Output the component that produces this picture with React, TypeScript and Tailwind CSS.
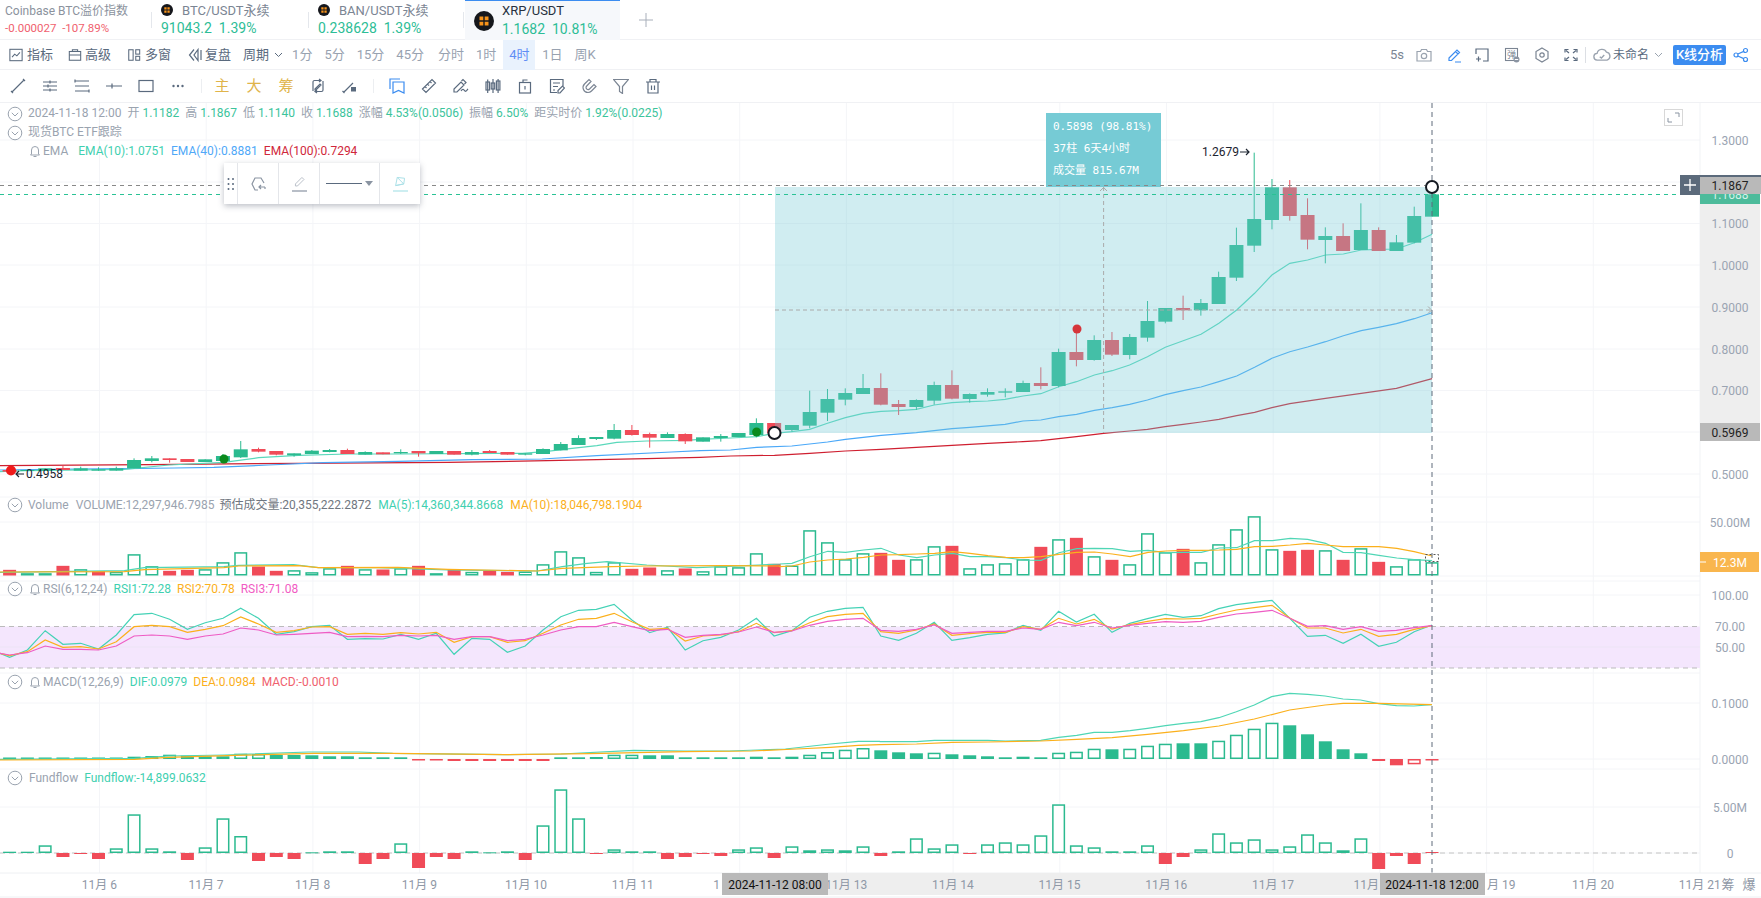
import React from "react";

const FONT = "font-['Roboto','Noto_Sans_CJK_SC',sans-serif]";
const X = (i: number) => 9.6 + 17.78 * i;
type P = [number, number];
const GREEN = "#2bba8f";
const RED = "#f04b58";

const z8 = (a: P[]): P[] => a.map(([x, y]) => [x * 0.4974, 380 + y / 3]);
const z3 = (a: P[]): P[] => a.map(([x, y]) => [700 + x * 0.5102, 100 + y / 3]);
const pts = (a: P[]) => a.map(([x, y]) => `${x.toFixed(1)},${y.toFixed(1)}`).join(" ");

const leftCandles = `r 270 270 275 275|g 270 270 273 273|g 265 265 272 272|r 257 264 270 270|g 260 265 272 272|g 262 268 272 272|g 260 265 272 272|g 235 240 265 265|g 228 235 243 247|r 235 235 240 248|r 237 237 246 246|g 238 238 246 246|g 222 228 243 250|g 183 208 232 234|r 203 207 215 217|r 213 213 224 226|g 220 220 226 230|g 210 212 222 222|g 207 210 216 217|r 206 210 222 222|g 214 216 224 224|r 217 217 223 223|g 208 216 220 222|r 213 213 220 230|g 213 213 222 222|r 213 213 224 224|g 210 216 224 226|r 210 213 219 219|r 216 216 224 224|g 220 220 224 226|g 205 207 222 222|g 186 192 211 211|g 166 174 195 195|g 171 171 177 180|g 132 150 176 178|r 135 150 165 167|r 158 162 173 203|g 157 162 174 174|r 160 162 184 192`
  .split("|").map((s) => s.split(" "));
const rightCandles = `g 1012 1012 1025 1025|g 1002 1008 1014 1025|g 999 999 1011 1011|g 955 969 1005 1012|r 969 969 1000 1000|g 975 975 990 995|g 872 936 977 985|g 867 897 938 963|g 865 879 899 916|g 822 864 882 882|r 820 864 914 916|r 900 912 921 945|g 898 900 921 930|g 845 855 902 914|r 811 855 896 898|g 880 882 897 908|g 865 876 884 890|g 865 874 878 892|g 842 849 876 876|r 802 849 858 868|g 746 756 858 862|r 680 756 780 799|g 706 720 780 782|r 696 720 764 768|g 702 711 765 778|g 603 663 713 725|g 624 624 665 670|r 587 624 631 660|g 597 609 631 647|g 515 531 612 612|g 383 435 533 543|g 158 357 437 456|g 237 262 360 388|r 240 262 348 362|r 295 345 419 448|g 382 408 420 490|r 370 408 453 453|g 310 390 450 450|r 382 390 453 453|g 405 427 453 453|g 320 348 428 430|g 260 283 350 350`
  .split("|").map((s) => s.split(" "));

const candles = [
  ...leftCandles.map((c) => ({ c: c[0], v: c.slice(1).map((n) => 380 + Number(n) / 3) })),
  ...rightCandles.map((c) => ({ c: c[0], v: c.slice(1).map((n) => 100 + Number(n) / 3) })),
];

const ema10 = [
  ...z8([[0, 275], [50, 272], [250, 268], [340, 255], [450, 247], [520, 233], [600, 226], [700, 222], [800, 222], [1000, 220], [1050, 220], [1100, 214], [1150, 205], [1200, 197], [1240, 187], [1300, 183], [1380, 181]]),
  ...z3([[0, 1018], [60, 1014], [111, 1010], [146, 1000], [180, 995], [215, 988], [250, 970], [285, 953], [320, 940], [355, 934], [390, 932], [424, 928], [459, 915], [494, 908], [529, 905], [564, 903], [598, 898], [633, 888], [668, 881], [703, 860], [738, 845], [773, 825], [808, 812], [842, 795], [877, 770], [912, 742], [947, 722], [982, 703], [1017, 670], [1052, 630], [1087, 580], [1121, 525], [1156, 490], [1191, 480], [1226, 465], [1261, 462], [1296, 450], [1330, 448], [1365, 447], [1400, 428], [1435, 403]]),
];
const ema40 = [
  ...z8([[0, 270], [100, 268], [250, 266], [350, 264], [430, 262], [540, 255], [650, 248], [800, 244], [950, 239], [1090, 237], [1200, 227], [1350, 216]]),
  ...z3([[0, 1052], [60, 1050], [111, 1042], [180, 1038], [250, 1026], [285, 1018], [355, 1006], [424, 998], [494, 986], [529, 982], [598, 973], [633, 963], [668, 960], [703, 950], [738, 943], [773, 931], [808, 923], [842, 913], [877, 900], [912, 884], [947, 872], [982, 861], [1017, 845], [1052, 828], [1087, 802], [1121, 775], [1156, 755], [1191, 741], [1226, 725], [1261, 707], [1296, 692], [1330, 682], [1365, 671], [1400, 656], [1435, 638]]),
];
const ema100 = [
  ...z8([[0, 257], [300, 254], [600, 250], [900, 247], [1100, 242], [1300, 236]]),
  ...z3([[0, 1072], [60, 1068], [146, 1066], [215, 1060], [285, 1053], [355, 1048], [424, 1042], [494, 1036], [564, 1030], [633, 1025], [668, 1022], [738, 1010], [791, 1000], [842, 993], [877, 988], [912, 980], [947, 973], [982, 966], [1017, 958], [1052, 947], [1087, 937], [1121, 923], [1156, 911], [1226, 895], [1296, 880], [1365, 865], [1435, 836]]),
];

const volTops = [
  "r510", "g520", "g520", "r498", "g508", "r514", "g516", "g463", "g499", "r513", "r510", "g508", "g487", "g457", "r500", "r513", "g511", "g517", "g505", "r498", "g508", "r509", "g505", "r498", "g520", "r510", "g516", "r513", "r516", "g515", "g493", "g454", "g472", "g516", "g487", "r507", "r503", "g511", "r506", "g514", "g499", "g502", "g460", "r492",
].map((s) => ({ c: s[0], h: (527 - Number(s.slice(1))) / 3 }));
const volTops2 = [
  "g227", "g121", "g157", "g208", "g190", "r189", "r210", "g208", "g169", "r168", "g235", "g223", "g220", "g208", "r171", "g148", "r144", "g199", "r210", "g223", "g130", "g187", "r177", "g217", "g163", "g118", "g79", "g178", "r183", "r180", "g181", "r210", "g175", "r216", "g229", "g208", "g217",
].map((s) => ({ c: s[0], h: (257 - Number(s.slice(1))) / 3 }));
const volumes = [...volTops, ...volTops2];

const parseBars = (s: string) =>
  s.split(" ").map((t) => ({ c: t[0], h: Number(t.slice(1)) }));

const macdBars = parseBars(
  "f1.5 f1.5 f1.5 f1.5 f1.5 f1.5 f1.5 h2.3 h3 h4.3 f3.3 f2.7 h2.7 h5.3 h5 f4 f4 f3.7 f2.7 f2.7 f1.7 f1.7 f1.7 r-1.5 r-1.5 r-2 r-2 r-2 r-2 r-2 r-2 f1.7 f1.7 h2 h4.3 h4.3 f3.7 f3.7 f1.7 f1.7 f1.7 f1.7 h2.3 f1.7 h2.3 h4.3 h7 h9.3 h11 f8.7 f6.7 f5.7 h6.3 f4.7 f3.7 f2.7 f1.7 h2.3 f1.7 h6.3 h7.3 h10.3 f9.7 h10.3 h13.3 h15.3 f15.7 f15.7 h18.3 h24.3 h30.3 h36.3 f33.7 f24.7 f17.7 f9.7 f5.7 r-2 r-6.3 o-5.3 r-1.5"
);
const fundBars = parseBars(
  "f1.3 f1.3 h7.7 r-4 r-1 r-6 h4.7 h38.7 h4.7 f1.7 r-7 h5.7 h34.7 h17 r-8 r-4 r-6 f0.7 f1.7 f1.7 r-11 r-6 h9.7 r-15 r-4 r-6 f1.7 f0.7 f1.7 r-7 h27.7 h63.7 h34.7 r-1 h3.7 f1.7 f1.7 r-6 r-4 r-1 r-3 h3.7 h5.7 r-5 h6.7 h2.7 h3.7 h2.7 h6.7 r-3 f1.7 h14.7 h4.7 h8.7 r-1 h8.7 h10.7 h8.7 h17.7 h48.7 h7.7 h5.7 f1.7 f1.7 h7.7 r-11 r-4 h3.7 h19.7 h10.7 h13.7 h3.7 h6.7 h18.7 h10.7 h2.7 h14.7 r-16 r-3 r-11 r1"
);

const seriesY = (left: number[], right: number[]): P[] => [
  [0, 400 + 760 / 3],
  ...left.map((y, i) => [X(i), 400 + y / 3] as P),
  ...right.map((y, i) => [X(i + 44), 490 + y / 3] as P),
];
const rsi1 = seriesY(
  [772, 750, 692, 733, 730, 747, 705, 644, 640, 658, 688, 668, 655, 625, 655, 703, 695, 680, 676, 718, 716, 717, 703, 718, 700, 763, 715, 718, 757, 738, 690, 650, 631, 628, 613, 660, 698, 682, 750, 722, 712, 690, 655, 708],
  [422, 382, 364, 355, 352, 438, 451, 430, 397, 451, 443, 433, 429, 406, 421, 364, 396, 373, 427, 400, 386, 373, 382, 377, 356, 344, 337, 331, 385, 439, 436, 460, 433, 469, 457, 425, 405]
);
const rsi2 = seriesY(
  [767, 755, 720, 742, 740, 747, 725, 680, 676, 680, 697, 688, 677, 651, 672, 697, 692, 681, 680, 703, 700, 703, 698, 702, 697, 727, 710, 710, 727, 722, 700, 675, 658, 655, 640, 665, 688, 685, 723, 708, 705, 695, 670, 698],
  [422, 398, 380, 373, 370, 425, 430, 420, 402, 436, 431, 427, 427, 410, 418, 385, 402, 388, 417, 404, 394, 386, 387, 385, 372, 360, 353, 346, 384, 414, 414, 429, 418, 439, 433, 418, 407]
);
const rsi3 = seriesY(
  [765, 758, 738, 748, 748, 750, 738, 708, 705, 708, 718, 708, 702, 684, 690, 705, 703, 700, 697, 710, 709, 710, 706, 708, 706, 718, 710, 710, 722, 718, 705, 690, 680, 680, 667, 680, 692, 688, 712, 706, 703, 696, 681, 697],
  [423, 406, 394, 388, 385, 421, 424, 418, 405, 430, 427, 424, 424, 414, 418, 397, 407, 397, 414, 406, 400, 395, 397, 394, 382, 372, 367, 361, 385, 409, 407, 418, 410, 424, 421, 413, 407]
);

const z4v = (a: P[]): P[] => a.map(([x, y]) => [x / 2.01, 400 + y / 3]);
const z5v = (a: P[]): P[] => a.map(([x, y]) => [780 + x * 0.4974, 490 + y / 3]);
const ma5 = [
  ...z4v([[0, 517], [250, 512], [290, 503], [450, 500], [480, 496], [590, 494], [640, 503], [760, 503], [900, 510], [1080, 513], [1130, 500], [1180, 490], [1220, 485], [1300, 495], [1400, 503], [1500, 497], [1568, 492]]),
  ...z5v([[0, 222], [24, 220], [60, 200], [96, 184], [132, 187], [168, 180], [203, 175], [239, 195], [275, 203], [311, 195], [347, 190], [382, 200], [418, 200], [454, 203], [490, 210], [525, 211], [561, 188], [597, 176], [632, 175], [668, 176], [704, 184], [740, 181], [776, 188], [811, 187], [847, 187], [883, 174], [918, 173], [954, 152], [990, 152], [1026, 145], [1061, 148], [1097, 160], [1132, 187], [1168, 188], [1204, 196], [1240, 204], [1275, 209], [1311, 212]]),
];
const ma10 = [
  ...z4v([[0, 516], [250, 515], [290, 509], [450, 503], [480, 498], [600, 497], [640, 503], [800, 502], [900, 508], [1080, 513], [1130, 505], [1230, 500], [1300, 498], [1450, 497], [1568, 498]]),
  ...z5v([[0, 230], [24, 228], [60, 216], [96, 210], [132, 207], [168, 202], [203, 195], [239, 194], [275, 192], [311, 190], [347, 185], [382, 190], [418, 197], [454, 202], [490, 203], [525, 200], [561, 193], [597, 187], [632, 186], [668, 192], [704, 200], [740, 187], [776, 183], [811, 181], [847, 181], [883, 180], [918, 178], [954, 170], [990, 169], [1026, 165], [1061, 160], [1097, 165], [1132, 170], [1168, 170], [1204, 170], [1240, 175], [1275, 185], [1311, 198]]),
];

const z6v = (a: P[]): P[] => a.map(([x, y]) => [x * 0.561, 670 + y / 3]);
const z7v = (a: P[]): P[] => a.map(([x, y]) => [880 + x * 0.562, 670 + y / 3]);
const dif = [
  ...z6v([[0, 268], [240, 265], [300, 258], [400, 255], [550, 246], [640, 246], [700, 250], [900, 254], [1000, 252], [1130, 241], [1220, 243], [1300, 243], [1400, 237], [1480, 222], [1530, 214], [1568, 214]]),
  ...z7v([[0, 215], [65, 215], [97, 211], [192, 211], [223, 213], [286, 211], [318, 202], [350, 196], [381, 187], [413, 187], [445, 182], [476, 175], [508, 167], [540, 160], [571, 155], [603, 143], [634, 125], [666, 105], [697, 80], [729, 70], [761, 73], [792, 78], [824, 87], [855, 90], [887, 101], [919, 107], [950, 108], [982, 104]]),
];
const dea = [
  ...z6v([[0, 270], [240, 268], [300, 262], [420, 256], [560, 250], [700, 250], [900, 254], [1050, 251], [1220, 245], [1340, 243], [1420, 237], [1480, 232], [1530, 226], [1568, 224]]),
  ...z7v([[0, 224], [65, 222], [128, 217], [192, 216], [286, 213], [350, 208], [413, 203], [476, 193], [540, 182], [603, 168], [666, 147], [729, 120], [792, 105], [824, 100], [887, 100], [982, 104]]),
];

const hGrid = [140, 182, 223.5, 265, 307, 349, 390.5, 432, 474, 497, 522, 576, 581, 595, 647, 673, 703, 759, 769, 807, 853];
const vGrid = Array.from({ length: 15 }, (_, k) => 99.5 + 106.7 * k);
const priceLabels: [string, number][] = [["1.3000", 140], ["1.1000", 223.5], ["1.0000", 265], ["0.9000", 307], ["0.8000", 349], ["0.7000", 390.5], ["0.5000", 474], ["50.00M", 522], ["100.00", 595], ["70.00", 626], ["50.00", 647], ["0.1000", 703], ["0.0000", 759], ["5.00M", 807], ["0", 853]];
const days: [string, number][] = [["11月 6", 0], ["11月 7", 1], ["11月 8", 2], ["11月 9", 3], ["11月 10", 4], ["11月 11", 5], ["11月 13", 7], ["11月 14", 8], ["11月 15", 9], ["11月 16", 10], ["11月 17", 11], ["11月 20", 14], ["11月 21", 15]];

function Bars({ data, base, w = 13 }: { data: { c: string; h: number }[]; base: number; w?: number }) {
  return (
    <g>
      {data.map((b, i) => {
        const x = X(i) - w / 2;
        const top = b.h >= 0 ? base - b.h : base;
        const h = Math.abs(b.h);
        const hollow = b.c === "h" || b.c === "g" || b.c === "o";
        const col = b.c === "r" || b.c === "o" ? RED : GREEN;
        return hollow ? (
          <rect key={i} x={x + 0.75} y={top + 0.75} width={w - 1.5} height={Math.max(h - 1.5, 0.5)} fill="#fff" stroke={col} strokeWidth={1.5} />
        ) : (
          <rect key={i} x={x} y={top} width={w} height={Math.max(h, 1)} fill={col} />
        );
      })}
    </g>
  );
}

const Line = ({ p, c, w = 1.2 }: { p: P[]; c: string; w?: number }) => (
  <polyline points={pts(p)} fill="none" stroke={c} strokeWidth={w} />
);

function Chart() {
  return (
    <svg className="absolute left-0 top-0" width={1761} height={795} viewBox="0 103 1761 795" fontFamily="Roboto,'Noto Sans CJK SC',sans-serif">
      {hGrid.map((y) => (
        <line key={y} x1={0} x2={1700} y1={y} y2={y} stroke="#f4f5f8" />
      ))}
      {vGrid.map((x) => (
        <line key={x} x1={x} x2={x} y1={103} y2={873} stroke="#f4f5f8" />
      ))}
      <line x1={1700} x2={1700} y1={103} y2={873} stroke="#f1f3f6" />

      {/* price pane */}
      <Line p={ema100} c="#cf1f30" />
      <Line p={ema40} c="#4aa8f8" />
      <Line p={ema10} c="#5ad8bb" />
      {candles.map((k, i) => {
        const col = k.c === "r" ? RED : GREEN;
        const x = X(i);
        const [wt, bt, bb, wb] = k.v;
        return (
          <g key={i}>
            <line x1={x} x2={x} y1={wt} y2={wb} stroke={col} />
            <rect x={x - 7} y={bt} width={14} height={Math.max(bb - bt, 1)} fill={col} />
          </g>
        );
      })}

      <rect x={775} y={187} width={657} height={246} fill="#76cbd5" fillOpacity={0.34} />
      <rect x={1046} y={113} width={115} height={74} fill="#76cbd5" />
      <g fontFamily="'DejaVu Sans Mono','Noto Sans CJK SC',monospace" fontSize={11} fill="#fff">
        <text x={1053} y={130}>0.5898 (98.81%)</text>
        <text x={1053} y={152}>37柱 6天4小时</text>
        <text x={1053} y={174}>成交量 815.67M</text>
      </g>
      <line x1={775} x2={1432} y1={310} y2={310} stroke="#aaa" strokeDasharray="4 3" />
      <line x1={1103.6} x2={1103.6} y1={187} y2={433} stroke="#aaa" strokeDasharray="4 3" />
      <polyline points="1100,191 1103.6,187.5 1107,191" fill="none" stroke="#aaa" />
      <polyline points="1428,306.5 1431.5,310 1428,313.5" fill="none" stroke="#aaa" />

      <line x1={0} x2={1680} y1={185.5} y2={185.5} stroke="#888" strokeDasharray="4 4" />
      <line x1={0} x2={1680} y1={194.5} y2={194.5} stroke="#2ac295" strokeDasharray="4 4" />

      <circle cx={1077} cy={329} r={4.5} fill="#d5353a" />
      <circle cx={756.6} cy={432} r={4.5} fill="#0b8a1c" />
      <circle cx={224} cy={459} r={4.5} fill="#0b8a1c" />
      <circle cx={11} cy={470.5} r={5} fill="#f01a1a" />
      <circle cx={774.5} cy={433} r={6} fill="#fff" stroke="#151a22" strokeWidth={2} />

      <text x={1202} y={156} fontSize={12} fill="#1c2430">1.2679</text>
      <path d="M1240 152h9m-3-3 3 3-3 3" fill="none" stroke="#1c2430" strokeWidth={1.2} />
      <path d="M24 474h-8m3-3-3 3 3 3" fill="none" stroke="#1c2430" strokeWidth={1.2} />
      <text x={26} y={478} fontSize={12} fill="#1c2430">0.4958</text>

      {/* volume */}
      <Bars data={volumes} base={575.5} />
      <Line p={ma5} c="#4fd6b5" />
      <Line p={ma10} c="#fbb01c" />
      <rect x={1425.5} y={554.5} width={13} height={7} fill="none" stroke="#555" strokeDasharray="2 2" />

      {/* rsi */}
      <rect x={0} y={626.5} width={1700} height={41.5} fill="#f4e6fd" />
      <line x1={0} x2={1700} y1={626.5} y2={626.5} stroke="#bbb" strokeDasharray="5 4" />
      <line x1={0} x2={1700} y1={668} y2={668} stroke="#bbb" strokeDasharray="5 4" />
      <line x1={0} x2={1700} y1={647} y2={647} stroke="#ece4f5" />
      <Line p={rsi1} c="#44d2b6" />
      <Line p={rsi2} c="#fbb01c" />
      <Line p={rsi3} c="#ee5cc4" />

      {/* macd */}
      <Bars data={macdBars} base={759} />
      <Line p={dif} c="#4fd6b5" />
      <Line p={dea} c="#fbb01c" />

      {/* fundflow */}
      <line x1={0} x2={1700} y1={853} y2={853} stroke="#c4c4c4" strokeDasharray="5 4" />
      <Bars data={fundBars} base={853} />

      {/* crosshair */}
      <line x1={1432} x2={1432} y1={103} y2={873} stroke="#5f6b7a" strokeDasharray="5 4" />
      <circle cx={1432} cy={187} r={6} fill="#fff" stroke="#151a22" strokeWidth={2} />

      {/* right axis */}
      <rect x={1700} y={187} width={60} height={236} fill="#eee" />
      <g fontSize={12} fill="#9aa4b2" textAnchor="middle">
        {priceLabels.map(([t, y]) => (
          <text key={t} x={1730} y={y + 4.5}>{t}</text>
        ))}
      </g>
      <rect x={1700} y={185} width={60} height={19} fill="#4dbb9b" />
      <text x={1730} y={198.5} fontSize={12} textAnchor="middle" fill="#d4f1e8">1.1688</text>
      <rect x={1700} y={175} width={61} height={2} fill="#5b6a7b" />
      <rect x={1700} y={177} width={61} height={17} fill="#b9b9b9" />
      <text x={1730} y={190} fontSize={12} textAnchor="middle" fill="#222">1.1867</text>
      <rect x={1680} y={175} width={20} height={20} fill="#5b6a7b" />
      <path d="M1684 185h12M1690 179v12" stroke="#fff" strokeWidth={1.3} />
      <rect x={1700} y={423} width={60} height={18} fill="#b9b9b9" />
      <text x={1730} y={437} fontSize={12} textAnchor="middle" fill="#222">0.5969</text>
      <rect x={1700} y={552} width={59} height={20} fill="#f9b64e" />
      <text x={1730} y={566.5} fontSize={12} textAnchor="middle" fill="#fff">12.3M</text>
      <line x1={1700} x2={1706} y1={562} y2={562} stroke="#fff" />

      {/* expand */}
      <rect x={1664.5} y={109.5} width={18} height={16} fill="#fff" stroke="#d8d8d8" />
      <path d="M1675 113h4v4M1672 122h-4v-4" fill="none" stroke="#8a94a2" />

      {/* time axis */}
      <line x1={0} x2={1761} y1={873} y2={873} stroke="#eef0f3" />
      <rect x={828} y={873} width={552} height={22} fill="#eee" />
      <g fontSize={12} fill="#8f98a6" textAnchor="middle">
        {days.map(([d, k]) => (
          <text key={d} x={99.3 + 106.7 * k} y={889}>{d}</text>
        ))}
      </g>
      <text x={720} y={889} fontSize={12} fill="#8f98a6" textAnchor="end">1</text>
      <text x={1379} y={889} fontSize={12} fill="#8f98a6" textAnchor="end">11月</text>
      <text x={1487} y={889} fontSize={12} fill="#8f98a6">月 19</text>
      <text x={1728} y={889} fontSize={13} fill="#8f98a6" textAnchor="middle">筹</text>
      <text x={1749} y={889} fontSize={13} fill="#8f98a6" textAnchor="middle">爆</text>
      <rect x={722} y={873} width={106} height={22} fill="#b9b9b9" />
      <text x={775} y={889} fontSize={12} fill="#111" textAnchor="middle">2024-11-12 08:00</text>
      <rect x={1380} y={873} width={105} height={22} fill="#b9b9b9" />
      <text x={1432} y={889} fontSize={12} fill="#111" textAnchor="middle">2024-11-18 12:00</text>
      <line x1={0} x2={1761} y1={897} y2={897} stroke="#eef0f3" />
    </svg>
  );
}

const Ic = ({ children, s = 16, cls = "text-[#5a6a7e]" }: { children: React.ReactNode; s?: number; cls?: string }) => (
  <svg width={s} height={s} viewBox="0 0 16 16" fill="none" stroke="currentColor" strokeWidth={1.2} className={`shrink-0 ${cls}`}>
    {children}
  </svg>
);

const Logo = ({ s }: { s: number }) => (
  <svg width={s} height={s} viewBox="0 0 20 20" className="shrink-0">
    <circle cx={10} cy={10} r={10} fill="#15171c" />
    <path d="M5.5 5.5h3.8v3.8H5.5zM10.7 5.5h3.8v3.8h-3.8zM5.5 10.7h3.8v3.8H5.5zM10.7 10.7h3.8v3.8h-3.8z" fill="#f7931a" />
  </svg>
);

function Tab({ name, price, pct, active, w }: { name: string; price: string; pct: string; active?: boolean; w: string }) {
  return (
    <div className={`${w} h-10 shrink-0 relative ${active ? "bg-[#f6f8fb] border-t border-[#3b8cf0]" : ""}`}>
      <div className={`flex items-center ${active ? "pt-[2px] pl-[9px] gap-[8px]" : "pt-[3px] pl-[9px] gap-[9px]"}`}>
        {!active && <Logo s={12} />}
        {active && <div className="h-[36px] flex items-center"><Logo s={20} /></div>}
        <div className={active ? "flex flex-col" : "flex flex-col -mb-[1px]"}>
          <span className={`text-[13px] leading-[16px] ${active ? "text-[#27313f]" : "text-[#7b8593]"}`}>{name}</span>
          {active && <span className="text-[14px] leading-[20px] text-[#2dbd96] whitespace-pre">{`${price}  ${pct}`}</span>}
        </div>
      </div>
      {!active && <div className="pl-[9px] text-[14px] leading-[20px] text-[#2dbd96] whitespace-pre">{`${price}  ${pct}`}</div>}
    </div>
  );
}

const Sep = () => <div className="w-px h-[16px] bg-[#e4e7ec] shrink-0" />;

const Chevron = () => (
  <svg width={16} height={16} viewBox="0 0 16 16" fill="none" stroke="#9aa3af" strokeWidth={1} className="shrink-0">
    <circle cx={8} cy={8} r={6.8} />
    <path d="M4.8 6.8 8 10l3.2-3.2" />
  </svg>
);
const Bell = () => (
  <svg width={14} height={14} viewBox="0 0 14 14" fill="none" stroke="#9aa3af" strokeWidth={1} className="shrink-0">
    <path d="M3.5 10V6a3.5 3.5 0 0 1 7 0v4l1 1h-9zM5.5 12.5h3" />
  </svg>
);

const Period = ({ t, on, extra }: { t: string; on?: boolean; extra?: boolean }) => (
  <span className={`text-[13px] h-[30px] flex items-center justify-center px-[5px] ${extra ? "ml-[2px]" : ""} ${on ? "bg-[#e9f2fd] text-[#5f8df5] w-[32px]" : "text-[#98a2b0]"}`}>{t}</span>
);

export default function App() {
  return (
    <div className={`w-[1761px] h-[898px] overflow-hidden bg-white flex flex-col ${FONT}`}>
      {/* tabs */}
      <header className="h-10 flex items-center border-b border-[#f0f1f4] shrink-0">
        <div className="w-[151px] shrink-0 pl-[5px] flex flex-col">
          <span className="text-[12px] leading-[17px] text-[#8b929d]">Coinbase BTC溢价指数</span>
          <span className="text-[11.5px] leading-[17px] text-[#f0616e] whitespace-pre">{`-0.000027  -107.89%`}</span>
        </div>
        <Sep />
        <Tab w="w-[156px]" name="BTC/USDT永续" price="91043.2" pct="1.39%" />
        <Sep />
        <Tab w="w-[154px]" name="BAN/USDT永续" price="0.238628" pct="1.39%" />
        <Sep />
        <div className="w-px shrink-0" />
        <Tab w="w-[155px]" active name="XRP/USDT" price="1.1682" pct="10.81%" />
        <svg width={14} height={14} viewBox="0 0 14 14" stroke="#a8afba" strokeWidth={1} className="ml-[19px]">
          <path d="M0 7h14M7 0v14" />
        </svg>
      </header>

      {/* menu row */}
      <div className="h-[30px] flex items-center border-b border-[#f0f1f4] shrink-0 text-[13px] text-[#5a6a7e]">
        <div className="flex items-center pl-[9px]">
          <Ic s={14}><rect x={1} y={1.5} width={14} height={13} /><path d="M3.5 10.5 6.5 7l2.5 2 3.5-4" /></Ic>
          <span className="ml-[4px]">指标</span>
          <span className="ml-[15px]"><Ic s={14}><rect x={1.5} y={4} width={13} height={10} /><path d="M1.5 8h13M5 4V2h6v2" /></Ic></span>
          <span className="ml-[3px]">高级</span>
          <span className="ml-[16px]"><Ic s={14}><rect x={2} y={2} width={5} height={12} /><rect x={10} y={2} width={4.5} height={5} /><rect x={10} y={9.5} width={4.5} height={4.5} /></Ic></span>
          <span className="ml-[4px]">多窗</span>
          <span className="ml-[16px]"><Ic><path d="M7 2.5 2.5 8 7 13.5M11 2.5 7 8l4 5.5zM14 3v10" /></Ic></span>
          <span className="ml-[2px]">复盘</span>
          <span className="ml-[12px]">周期</span>
          <svg width={9} height={6} viewBox="0 0 9 6" fill="none" stroke="#5a6a7e" className="ml-[5px]"><path d="M1 1l3.5 3.5L8 1" /></svg>
          <div className="flex items-center ml-[4px] gap-[2px]">
            <Period t="1分" />
            <Period t="5分" />
            <Period t="15分" />
            <Period t="45分" />
            <Period t="分时" extra />
            <Period t="1时" />
            <Period t="4时" on />
            <Period t="1日" />
            <Period t="周K" />
          </div>
        </div>
        <div className="ml-auto flex items-center pr-[12px] text-[#7b8593]">
          <span className="text-[13px]">5s</span>
          <span className="ml-[12px]"><Ic cls="text-[#9aa3af]"><path d="M1 4.5h3.5l1-2h5l1 2H15v9.5H1z" /><circle cx={8} cy={9} r={2.7} /></Ic></span>
          <span className="ml-[14px]"><Ic cls="text-[#3b8cf0]"><path d="M3 11 11 3l2.5 2.5-8 8H3zM9.5 4.5 12 7M9 15h6" /></Ic></span>
          <span className="ml-[12px]"><Ic><path d="M5 2h9v12H9M2 7V2h3M2 12h5M4.5 9.5v5" /></Ic></span>
          <span className="ml-[14px]">
            <svg width={16} height={16} viewBox="0 0 16 16" className="shrink-0">
              <rect x={1.5} y={1.5} width={12} height={12} fill="none" stroke="#7b8593" strokeWidth={1.1} />
              <text x={3} y={11} fontSize={9} fill="#7b8593" fontFamily="'Noto Sans CJK SC',sans-serif">弹</text>
              <circle cx={12.5} cy={12.5} r={3} fill="#8a94a2" />
              <path d="M10.8 12.5h3.4" stroke="#fff" />
            </svg>
          </span>
          <span className="ml-[14px]"><Ic cls="text-[#7b8593]"><path d="M8 1 14 4.5v7L8 15l-6-3.5v-7z" /><circle cx={8} cy={8} r={2.2} /></Ic></span>
          <span className="ml-[13px]"><Ic><path d="M2 5.5V2.5h3.5M14 5.5V2.5h-3.5M2 10.5v3h3.5M14 10.5v3h-3.5M3 3.5 6 6M13 3.5 10 6M3 12.5 6 10M13 12.5 10 10" /></Ic></span>
          <div className="w-px h-[16px] bg-[#dcdfe4] ml-[6px]" />
          <span className="ml-[7px]"><Ic s={18} cls="text-[#9aa3af]"><path d="M4 12.5a3 3 0 0 1-.4-6A4.5 4.5 0 0 1 12 5.5a3.6 3.6 0 0 1 .5 7zM6 9.5l1.5 1.2L10 8" /></Ic></span>
          <span className="ml-[2px] text-[12px] text-[#5a6a7e]">未命名</span>
          <svg width={9} height={6} viewBox="0 0 9 6" fill="none" stroke="#9aa3af" className="ml-[5px]"><path d="M1 1l3.5 3.5L8 1" /></svg>
          <span className="ml-[10px] w-[53px] h-[20px] rounded-[2px] bg-[#3b8cf0] text-white text-[13px] font-medium flex items-center justify-center">K线分析</span>
          <span className="ml-[7px]"><Ic cls="text-[#3b8cf0]"><circle cx={12.5} cy={3.5} r={2} /><circle cx={12.5} cy={12.5} r={2} /><circle cx={3} cy={8} r={2} /><path d="M4.8 7 10.8 4.4M4.8 9l6 2.6" /></Ic></span>
        </div>
      </div>

      {/* drawing tools */}
      <div className="h-[33px] flex items-center pl-[2px] border-b border-[#f0f1f4] shrink-0">
        {[
          <path key="a" d="M2 14 14 2M1 13l2 2M13 1l2 2" />,
          <path key="b" d="M1 4h14M1 8h14M1 12h14M8 2.5v3M6 6.5v3M8 10.5v3" />,
          <path key="c" d="M1 3h14M1 8h14M1 13h14M1 1.5v3M15 11.5v3" />,
          <path key="d" d="M0 8h16M6 5.5v5" />,
          <rect key="e" x={1} y={2.5} width={14} height={11} />,
          <g key="f" fill="currentColor" stroke="none"><circle cx={3.5} cy={8} r={1.2} /><circle cx={8} cy={8} r={1.2} /><circle cx={12.5} cy={8} r={1.2} /></g>,
        ].map((d, i) => (
          <span key={i} className="w-8 flex justify-center"><Ic>{d}</Ic></span>
        ))}
        <div className="w-px h-[14px] bg-[#eceef1] ml-[7px] mr-[4px]" />
        {["主", "大", "筹"].map((t) => (
          <span key={t} className="w-8 text-center text-[15px] text-[#e0b44a]">{t}</span>
        ))}
        <span className="w-8 flex justify-center"><Ic><path d="M3 13V4a1.5 1.5 0 0 1 1.5-1.5H10M13 3v9a1.5 1.5 0 0 1-1.5 1.5H6M5 11l5-5 1 1-5 5H5zM9 1l2 1.5L9 4M7 12l-2 1.5L7 15" /></Ic></span>
        <span className="w-8 flex justify-center"><Ic><path d="M1.5 14.5 11 5M0.5 13l2 2" /><rect x={9} y={9} width={5} height={4.5} fill="currentColor" stroke="none" /></Ic></span>
        <div className="w-px h-[14px] bg-[#eceef1] ml-[7px] mr-[7px]" />
        {[
          <Ic key="1" cls="text-[#3b8cf0]"><path d="M1 11V1h10M4 4h11v11l-5.5-2.5L4 15z" /></Ic>,
          <Ic key="2"><path d="m1.5 11 9.5-9.5 3.5 3.5L5 14.5zM4 8.5l1.5 1.5M6.5 6l1.5 1.5M9 3.5 10.5 5" /></Ic>,
          <Ic key="3"><path d="M1 14v-3l7-7 3 3-7 7zM8.5 3 10 1.5l3 3L11.5 6M8 13c2-3 3-1 4 0s2-1 3-2" /></Ic>,
          <Ic key="4"><rect x={1} y={4} width={3.5} height={8} /><rect x={6.2} y={5} width={3.5} height={6} /><rect x={11.4} y={3} width={3.5} height={9} /><path d="M2.7 1.5V15M8 1v14M13.1 1v14" /></Ic>,
          <Ic key="5"><rect x={2.5} y={4.5} width={11} height={10.5} /><path d="M6 4.5V2h4.5M8 8v3.5" /></Ic>,
          <Ic key="6"><path d="M14 8V1.5H1.5v13H8M4 5h7M4 8.5h5M4 12h2M9 15v-2.5L13.5 8 15.5 10 11 15z" /></Ic>,
          <Ic key="7" cls="text-[#7b8593]"><path d="M7 14.5A5 5 0 0 1 3.5 6L8 1.5 10 3.5 5.7 8A2 2 0 0 0 8.5 11L13 6.5 15 8.5 10.5 13A5 5 0 0 1 7 14.5Z" /></Ic>,
          <Ic key="8" cls="text-[#7b8593]"><path d="M0.5 1.5h15L9.5 8.5v7l-3-2V8.5z" /></Ic>,
          <Ic key="9"><path d="M3 4v11h10V4M1 4h14M5 4V1.5h6V4M6.5 7.5v4.5M9.5 7.5v4.5" /></Ic>,
        ].map((ic, i) => (
          <span key={i} className="w-8 flex justify-center">{ic}</span>
        ))}
      </div>

      {/* canvas */}
      <main className="relative flex-1 text-[12px] leading-[19px]">
        <Chart />
        <div className="absolute inset-0 flex flex-col pl-[7px] text-[#9aa3af] whitespace-pre pointer-events-none">
          <section className="h-[392px] pt-[1px]">
            <div className="flex items-center h-[19px] gap-[5px]">
              <Chevron />
              <span>
                {"2024-11-18 12:00  开 "}<G>1.1182</G>{"  高 "}<G>1.1867</G>{"  低 "}<G>1.1140</G>{"  收 "}<G>1.1688</G>{"  涨幅 "}<G>4.53%(0.0506)</G>{"  振幅 "}<G>6.50%</G>{"  距实时价 "}<G>1.92%(0.0225)</G>
              </span>
            </div>
            <div className="flex items-center h-[19px] gap-[5px]"><Chevron /><span>现货BTC ETF跟踪</span></div>
            <div className="flex items-center h-[18px] pl-[21px]">
              <Bell />
              <span className="ml-[1px]">EMA</span>
              <span className="ml-[10px] text-[#3fd0b0]">EMA(10):1.0751</span>
              <span className="ml-[6px] text-[#4fa8f8]">EMA(40):0.8881</span>
              <span className="ml-[6px] text-[#d0273a]">EMA(100):0.7294</span>
            </div>
          </section>
          <section className="h-[84px]">
            <div className="flex items-center h-[20px]">
              <Chevron />
              <span className="ml-[5px]">Volume</span>
              <span className="ml-[7px]">VOLUME:12,297,946.7985</span>
              <span className="ml-[5px] text-[#6f7680]">预估成交量:20,355,222.2872</span>
              <span className="ml-[7px] text-[#3fd0b0]">MA(5):14,360,344.8668</span>
              <span className="ml-[7px] text-[#fbb01c]">MA(10):18,046,798.1904</span>
            </div>
          </section>
          <section className="h-[93px]">
            <div className="flex items-center h-[20px]">
              <Chevron />
              <span className="ml-[5px]"><Bell /></span>
              <span className="ml-[1px]">RSI(6,12,24)</span>
              <span className="ml-[6px] text-[#3fd0b0]">RSI1:72.28</span>
              <span className="ml-[6px] text-[#fbb01c]">RSI2:70.78</span>
              <span className="ml-[6px] text-[#f15bc3]">RSI3:71.08</span>
            </div>
          </section>
          <section className="h-[96px]">
            <div className="flex items-center h-[20px]">
              <Chevron />
              <span className="ml-[5px]"><Bell /></span>
              <span className="ml-[1px]">MACD(12,26,9)</span>
              <span className="ml-[6px] text-[#3fd0b0]">DIF:0.0979</span>
              <span className="ml-[6px] text-[#fbb01c]">DEA:0.0984</span>
              <span className="ml-[6px] text-[#f0616e]">MACD:-0.0010</span>
            </div>
          </section>
          <section>
            <div className="flex items-center h-[20px]">
              <Chevron />
              <span className="ml-[6px]">Fundflow</span>
              <span className="ml-[6px] text-[#3fd0b0]">Fundflow:-14,899.0632</span>
            </div>
          </section>
        </div>

        {/* floating drawing toolbar */}
        <div className="absolute left-[224px] top-[60px] w-[196px] h-[41px] bg-white flex items-center shadow-[0_2px_6px_rgba(60,70,90,0.35)]">
          <div className="w-[14px] h-full flex items-center justify-center border-r border-[#e4e6ea]">
            <svg width={8} height={16} viewBox="0 0 8 16" fill="#5a6a7e"><circle cx={1.5} cy={3} r={1} /><circle cx={6} cy={3} r={1} /><circle cx={1.5} cy={8} r={1} /><circle cx={6} cy={8} r={1} /><circle cx={1.5} cy={13} r={1} /><circle cx={6} cy={13} r={1} /></svg>
          </div>
          <div className="w-[41px] h-full flex items-center justify-center border-r border-[#e4e6ea]">
            <Ic cls="text-[#8a94a2]"><path d="M14 7 11 2H5L2 8l3 6h3M9 11h6M11 9l-2 2 2 2M15 11v2" /></Ic>
          </div>
          <div className="w-[41px] h-full flex flex-col items-center justify-center gap-[2px] border-r border-[#e4e6ea]">
            <Ic s={13} cls="text-[#b8bec7]"><path d="M3 11 11 3l2.5 2.5-8 8H3z" /></Ic>
            <div className="w-[15px] h-[2px] bg-[#b8bec7]" />
          </div>
          <div className="w-[60px] h-full flex items-center justify-center gap-[3px] border-r border-[#e4e6ea]">
            <div className="w-[36px] h-px bg-[#5a6a7e]" />
            <div className="w-0 h-0 border-x-[4px] border-x-transparent border-t-[5px] border-t-[#8a94a2]" />
          </div>
          <div className="flex-1 h-full flex flex-col items-center justify-center gap-[2px]">
            <Ic s={13} cls="text-[#a9dfe6]"><path d="M2 13 4 3l9 1-1 7zM4 3l8 8M2 13l10-2" /></Ic>
            <div className="w-[15px] h-[2px] bg-[#cdeef1]" />
          </div>
        </div>
      </main>
    </div>
  );
}

function G({ children }: { children: React.ReactNode }) {
  return <span className="text-[#3cc49c]">{children}</span>;
}
